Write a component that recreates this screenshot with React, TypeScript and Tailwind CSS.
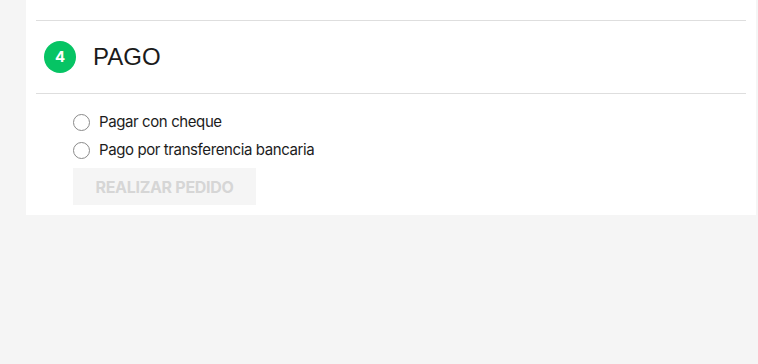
export default function App() {
  const options = ["Pagar con cheque", "Pago por transferencia bancaria"];

  return (
    <div className="min-h-[364px] w-full bg-[#f5f5f5] pl-[26px] pr-[2px]" style={{ fontFamily: "Inter, 'Noto Sans', sans-serif" }}>
      <div className="bg-white px-[10px] pt-[20px] pb-[10px]">
        <div className="border-t border-[#dedede]" />
        <div className="flex h-[73px] items-center gap-[17px] pl-[8px] border-b border-[#dedede]">
          <span className="flex h-[32px] w-[32px] items-center justify-center rounded-full bg-[#06c464] text-[15px] font-bold text-white">
            4
          </span>
          <h2 className="text-[24px] text-[#1b1b1b]" style={{ fontFamily: "'Liberation Sans', Arial, sans-serif" }}>
            PAGO
          </h2>
        </div>
        <div className="pl-[37px] pt-[20px]">
          <ul className="flex flex-col gap-[11px]">
            {options.map((o) => (
              <li key={o} className="flex h-[17px] items-center gap-[9px]">
                <span className="h-[17px] w-[17px] rounded-full border border-[#8a8a8a] bg-white" />
                <span className="text-[15px] tracking-[-0.4px] text-[#1c1c1c]">{o}</span>
              </li>
            ))}
          </ul>
          <button className="mt-[9px] h-[37px] w-[183px] bg-[#f5f5f5] text-[16px] font-bold tracking-[-0.3px] text-[#d6d6d6]">
            REALIZAR PEDIDO
          </button>
        </div>
      </div>
    </div>
  );
}
